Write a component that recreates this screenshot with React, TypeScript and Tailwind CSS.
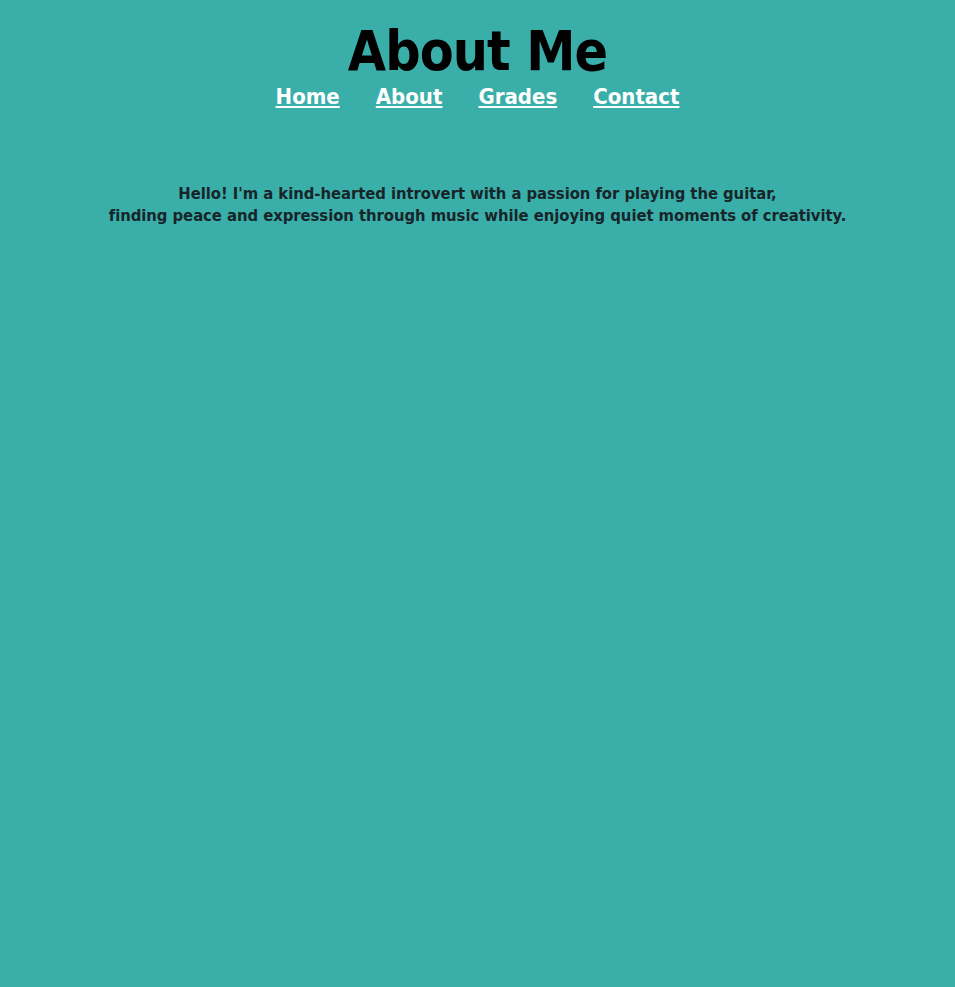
import React from 'react';

const links = ['Home', 'About', 'Grades', 'Contact'];

const App: React.FC = () => {
    return (
        <div
            className="min-h-[987px] bg-[#3aafa9] text-center"
            style={{ fontFamily: '"DejaVu Sans Condensed", "DejaVu Sans", sans-serif' }}
        >
            <header className="pt-[19px]">
                <h1 className="text-[55px] leading-[64px] font-bold tracking-[-0.9px] text-black">About Me</h1>
                <nav className="flex justify-center gap-[36px]">
                    {links.map(l => (
                        <a key={l} href="#" className="text-[22px] leading-[28px] font-bold text-white underline">
                            {l}
                        </a>
                    ))}
                </nav>
            </header>
            <p className="mt-[72px] text-[16.5px] leading-[22px] font-bold tracking-[-0.05px] text-[#17252a]">
                Hello! I'm a kind-hearted introvert with a passion for playing the guitar,
                <br />
                finding peace and expression through music while enjoying quiet moments of creativity.
            </p>
        </div>
    );
};

export default App;
